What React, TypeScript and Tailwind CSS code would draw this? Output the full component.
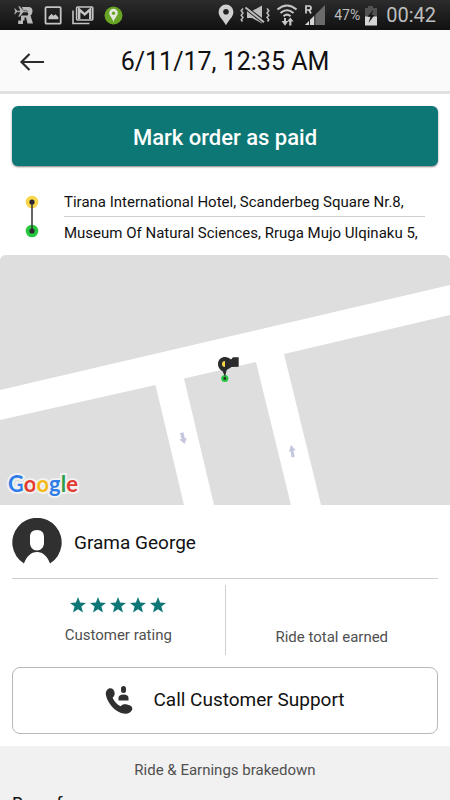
import React from "react";

function RideAppIcon() {
  return (
    <svg width="20" height="20" viewBox="0 0 20 20" fill="#b9b9b9" aria-hidden="true">
      <path d="M8 2h6.500q4 0 4 4.200q0 3-2 4.200l2.500 8h-5.500l-1.500-6h-1.500v3h-1.500v3.600H4.200v-3.400H7v-5h6q1.200 0 1.200-1.600T13 7.300H9.500z" />
      <path d="M1 3l2 2.400h3L4 1h1.600l4 4.400H12.500l1 .9-1 .9H9.600l-4 4.800H4l2-4.800H3L1 9.600H0l1-3.300L0 3z" stroke="#222" strokeWidth="0.500" />
    </svg>
  );
}

function PhotoIcon() {
  return (
    <svg width="18" height="19" viewBox="0 0 18 19" aria-hidden="true">
      <rect x="1.500" y="1.200" width="15.200" height="16.500" rx="1" fill="none" stroke="#c4c4c4" strokeWidth="1.800" />
      <path d="M4.500 13.200V11l3-3.200 2 2 2-1.600 2.800 3v2z" fill="#c4c4c4" />
    </svg>
  );
}

function MailIcon() {
  return (
    <svg width="22" height="19" viewBox="0 0 22 19" fill="none" stroke="#c4c4c4" aria-hidden="true">
      <path d="M1 4.500V17.500H17.500" strokeWidth="1.600" />
      <rect x="4.600" y="1" width="16.200" height="13" rx="1" strokeWidth="1.600" />
      <path d="M7.200 13V3.500l5.500 5 5.500-5V13" strokeWidth="2.400" />
    </svg>
  );
}

function TaxiIcon() {
  return (
    <svg width="19" height="19" viewBox="0 0 19 19" aria-hidden="true">
      <circle cx="9.500" cy="9.500" r="9" fill="#68a524" />
      <path d="M9.500 2.800a4.300 4.300 0 0 1 4.300 4.300c0 3-3.200 4.600-4.300 9.200C8.400 11.700 5.200 10.100 5.200 7.100a4.300 4.300 0 0 1 4.300-4.300z" fill="#e4e8df" />
      <circle cx="9.500" cy="7.300" r="1.700" fill="#68a524" />
    </svg>
  );
}

function LocationIcon() {
  return (
    <svg width="16" height="22" viewBox="0 0 16 22" aria-hidden="true">
      <path fillRule="evenodd" d="M8 .5A7.400 7.400 0 0 1 15.400 8C15.400 13 11 15.500 8 21.300 5 15.500.6 13 .6 8A7.400 7.400 0 0 1 8 .5zM8 5a2.800 2.800 0 1 0 0 5.600A2.800 2.800 0 0 0 8 5z" fill="#cfcfcf" />
    </svg>
  );
}

function MuteVibrateIcon() {
  return (
    <svg width="30" height="20" viewBox="0 0 30 20" fill="none" stroke="#bdbdbd" aria-hidden="true">
      <path d="M3 3.500L1.200 5.700 3 8 1.200 10.300 3 12.500 1.200 14.700 2.500 16.500M27 3.500l1.800 2.200L27 8l1.800 2.300L27 12.500l1.800 2.200L27.500 16.500" strokeWidth="1.500" />
      <path d="M7 6h5l10-5.500v18l-10-5.500H7z" fill="#bdbdbd" stroke="none" />
      <path d="M6 3l18 14" stroke="#1a1a1a" strokeWidth="4" />
      <path d="M5.500 2.500l18.500 14.800" strokeWidth="2" />
    </svg>
  );
}

function WifiIcon() {
  return (
    <svg width="22" height="24" viewBox="0 0 22 24" fill="none" stroke="#c6c6c6" aria-hidden="true">
      <path d="M1.500 6.500Q11-1.500 20.500 6.500M4.500 10Q11 4.500 17.500 10M7.500 13.200Q11 10.200 14.500 13.200" strokeWidth="2.100" />
      <path d="M5.500 18h2.500v-3h2v3h2.400L9 22.800zM11 18.600l3.300-4 3.300 4h-2.200v3.800h-2.200v-3.800z" fill="#c6c6c6" stroke="none" />
    </svg>
  );
}

function SignalIcon() {
  return (
    <svg width="22" height="22" viewBox="0 0 22 22" aria-hidden="true">
      <path d="M21 1v20H1z" fill="#6b6b6b" />
      <path d="M10.500 11.500V21H1z" fill="#d6d6d6" />
      <path d="M5.500 13v8M10.800 10v11" stroke="#222" />
      <path d="M2 9.500V2h3q2 0 2 2T5 6H2.500M5 6l2 3.500" fill="none" stroke="#d0d0d0" strokeWidth="1.700" />
    </svg>
  );
}

function BatteryIcon() {
  return (
    <svg width="14" height="21" viewBox="0 0 14 21" aria-hidden="true">
      <path d="M4 1h5v2h4v9H1V3h3z" fill="#515151" />
      <path d="M1 11.500h12V20.500H1z" fill="#d5d5d5" />
      <path d="M9.500 4.500L3.500 11.700h3L4.500 18l6-8h-3z" fill="#161616" />
    </svg>
  );
}

function StatusBar() {
  return (
    <div className="flex h-[30px] shrink-0 items-center justify-between bg-linear-to-b from-[#2c2c2c] to-[#111111] px-3.5 text-[#bebebe]">
      <div className="flex items-center gap-2.5">
        <RideAppIcon />
        <PhotoIcon />
        <MailIcon />
        <TaxiIcon />
      </div>
      <div className="flex items-center">
        <LocationIcon />
        <span className="ml-1.5 flex items-center gap-1.5">
          <MuteVibrateIcon />
          <WifiIcon />
          <SignalIcon />
        </span>
        <span className="ml-2 text-sm">47%</span>
        <span className="ml-1">
          <BatteryIcon />
        </span>
        <span className="ml-2 text-xl">00:42</span>
      </div>
    </div>
  );
}

function Header() {
  return (
    <header className="flex h-16 shrink-0 items-center border-b-3 border-[#e1e1e1] bg-[#fafafa] px-[18px] pt-0.5">
      <button type="button" aria-label="Back" className="flex w-7 justify-center">
        <svg width="26" height="20" viewBox="0 0 26 20" fill="none" stroke="#2b2b2b" strokeWidth="2.200" aria-hidden="true">
          <path d="M25 10H3M10.500 2L2.500 10l8 8" />
        </svg>
      </button>
      <h1 className="flex-1 pr-7 text-center text-[25px] leading-8">6/11/17, 12:35 AM</h1>
    </header>
  );
}

function Route() {
  return (
    <section className="flex px-[25px] pt-5 pb-2">
      <svg width="14" height="60" viewBox="0 0 14 60" className="shrink-0" aria-hidden="true">
        <circle cx="7" cy="16" r="6.300" fill="#f7d64a" />
        <circle cx="7" cy="45" r="6.300" fill="#27c840" />
        <path d="M7 16v29" stroke="#333" strokeWidth="1.500" />
        <circle cx="7" cy="16" r="2.600" fill="#2b2630" />
        <circle cx="7" cy="45" r="2.600" fill="#2b2630" />
      </svg>
      <div className="ml-[25px] flex-1 text-[15px] whitespace-nowrap">
        <p className="border-b border-[#cfcfcf] pt-0.5 leading-7">Tirana International Hotel, Scanderbeg Square Nr.8,</p>
        <p className="pt-0.5 leading-7">Museum Of Natural Sciences, Rruga Mujo Ulqinaku 5,</p>
      </div>
    </section>
  );
}

function GoogleMark() {
  return (
    <div
      className="absolute bottom-[7px] left-2 font-['Lato',sans-serif] text-[22px] leading-7 font-bold [paint-order:stroke_fill] [-webkit-text-stroke:4px_#f1f1f1]"
      aria-label="Google"
    >
      <span className="text-[#2f7de8]">G</span>
      <span className="text-[#e33b2e]">o</span>
      <span className="text-[#f6b914]">o</span>
      <span className="text-[#2f7de8]">g</span>
      <span className="text-[#2f9e4b]">l</span>
      <span className="text-[#e33b2e]">e</span>
    </div>
  );
}

function RideMap() {
  return (
    <section className="relative h-[250px] shrink-0 overflow-hidden rounded-t-md bg-[#dedede]">
      <svg viewBox="0 0 450 250" preserveAspectRatio="xMidYMid slice" className="h-full w-full" role="img" aria-label="Ride map">
        <rect width="450" height="250" fill="#dedede" />
        <path d="M0 135L450 30V60L284 99L321 250H291L256 107L184 123.500L214 250H184L155.500 130L0 165z" fill="#fff" />
        <path d="M180 178l3.400-.8 1.400 6 2-.5-2.200 6.300-5.200-4.500 2.200-.5zM291.400 202.500l3.400-.8-1.400-6 2.300-.5-4.700-5.200-2.200 6.700 2-.5z" fill="#c3c8df" />
        <circle cx="224.800" cy="123.500" r="3.600" fill="#27c840" />
        <path d="M225 122l-2.200-5.500Q218 114 218 109c0-7.500 9-9 13-4.500l2-2.300h5.700v9.600l-7 .2-5 3z" fill="#2b2b2b" />
        <path d="M225 106v6a3 3 0 0 1 0-6z" fill="#f7d64a" />
        <circle cx="224.800" cy="123.500" r="1.400" fill="#2b2b2b" />
      </svg>
      <GoogleMark />
    </section>
  );
}

function Avatar() {
  return (
    <svg width="50" height="50" viewBox="0 0 50 50" className="shrink-0" aria-hidden="true">
      <path
        fillRule="evenodd"
        d="M12 45.500A24.700 24.700 0 1 1 38 45.500C35.500 38.500 31 34 25 34S14.500 38.500 12 45.500zM25 12c-5 0-7 3-7 7v6c0 4 3 7.500 7 7.500s7-3.500 7-7.500v-6c0-4-2-7-7-7z"
        fill="#303030"
      />
    </svg>
  );
}

function Star() {
  return (
    <svg width="16" height="16" viewBox="0 0 16 16" fill="#0c7775" aria-hidden="true">
      <path d="M8 0l2.100 5.600 5.900.3-4.600 3.700L13 15.500 8 12.200 3 15.500l1.600-5.900L0 5.900l5.900-.3z" />
    </svg>
  );
}

function Stats() {
  return (
    <div className="mx-3 flex border-t border-[#cfcfcf] pt-1.5 text-[15px] leading-5 text-[#505050]">
      <div className="flex h-[70px] flex-1 flex-col items-center border-r border-[#cfcfcf] pt-3">
        <div className="flex gap-1" role="img" aria-label="5 stars">
          <Star />
          <Star />
          <Star />
          <Star />
          <Star />
        </div>
        <p className="mt-3">Customer rating</p>
      </div>
      <div className="flex flex-1 items-end justify-center pb-2">
        <p>Ride total earned</p>
      </div>
    </div>
  );
}

function SupportIcon() {
  return (
    <svg width="30" height="30" viewBox="0 0 30 30" fill="#303030" aria-hidden="true">
      <path d="M2 4C4.500.8 9 2.300 9.600 6.500c.3 2.600-.5 4-2 5.200 1.800 4 4.200 6.600 8 8.600 1.800-2.300 4-2.600 6.500-1.700 3.700 1 6 2.300 5 5.200-1.700 4.500-7 4.700-11 3.200C9 24.300 3 17.500 1 9.500.5 7 .8 5.500 2 4z" />
      <rect x="16" y="0" width="5" height="7" rx="2.500" />
      <path d="M13.500 14.500V12q0-3.500 5-3.500t5 3.500v2.500z" />
    </svg>
  );
}

export default function App() {
  return (
    <div className="flex h-screen flex-col overflow-hidden bg-white font-['Roboto',sans-serif] text-[#111111]">
      <StatusBar />
      <Header />
      <main className="min-h-0 flex-1 overflow-hidden">
        <div className="px-3 pt-3">
          <button type="button" className="h-[60px] w-full rounded-md bg-[#0c7775] pt-0.5 text-[22px] font-medium text-white shadow-[0_1px_2px_rgba(0,0,0,0.5)]">
            Mark order as paid
          </button>
        </div>
        <Route />
        <RideMap />
        <div className="flex h-[73px] items-center gap-3 px-3 pt-0.5 text-[19px]">
          <Avatar />
          <span className="pt-0.5">Grama George</span>
        </div>
        <Stats />
        <div className="px-3 py-3">
          <button type="button" className="flex h-[67px] w-full items-center justify-center gap-[18px] rounded-lg border border-[#b8b8b8] text-[19px]">
            <SupportIcon />
            Call Customer Support
          </button>
        </div>
        <section className="bg-[#f1f1f1] px-3">
          <h2 className="text-center text-[15px] leading-[48px] text-[#505050]">Ride &amp; Earnings brakedown</h2>
          <p className="text-lg leading-5">Base fare</p>
        </section>
      </main>
    </div>
  );
}
